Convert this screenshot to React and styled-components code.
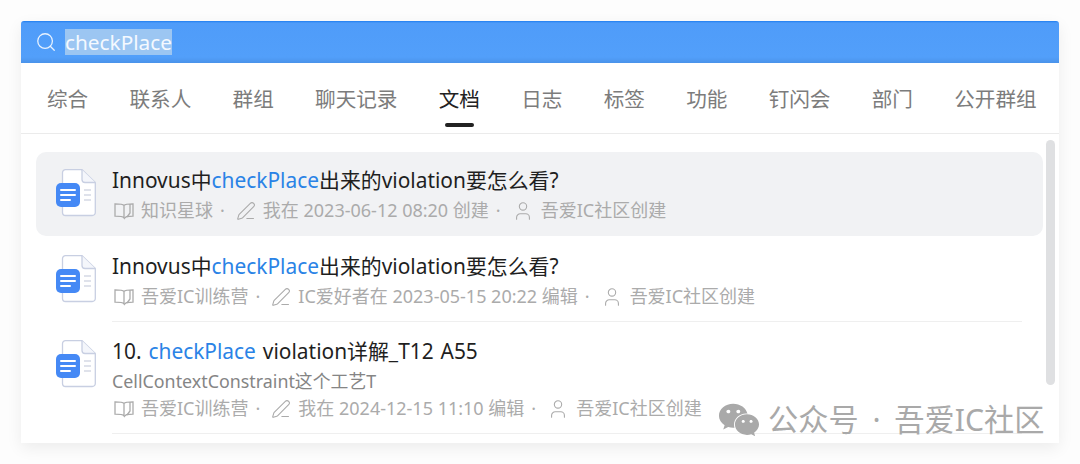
import React from "react";
import styled, { createGlobalStyle } from "styled-components";
import { Search, PenLine, User } from "lucide-react";
import { FaWeixin } from "react-icons/fa";

const FONT = `"Noto Sans", "Noto Sans CJK SC", sans-serif`;

const Global = createGlobalStyle`
  html, body { margin: 0; padding: 0; background: #fdfdfd; font-family: ${FONT}; }
`;
const Page = styled.div`
  position: relative;
  width: 1080px;
  height: 464px;
  padding: 21px 21px 21px;
  box-sizing: border-box;
  overflow: hidden;
`;
const Window = styled.div`
  position: relative;
  height: 422px;
  background: #fff;
  border-radius: 3px 3px 0 0;
  box-shadow: 0 5px 16px rgba(0, 0, 0, 0.07);
  overflow: hidden;
`;
const SearchBar = styled.div`
  height: 42px;
  box-sizing: border-box;
  display: flex;
  align-items: center;
  gap: 8px;
  padding-left: 14px;
  background: linear-gradient(#1f7df0 0, #4f9cf9 2px, #529ffa 36px, #4a93ea 42px);
  color: #e8f2fe;
`;
const Query = styled.span`
  font-size: 20.8px;
  line-height: 26px;
  background: #9cc6f2;
  color: #f4f9ff;
`;
const Tabs = styled.nav`
  height: 71px;
  box-sizing: border-box;
  display: flex;
  gap: 41.3px;
  padding: 0 0 0 26px;
  border-bottom: 1px solid #ebebeb;
`;
const Tab = styled.div`
  position: relative;
  font-size: 20.6px;
  line-height: 73px;
  height: 70px;
  white-space: nowrap;
  color: ${(p) => (p.$active ? "#222" : "#7c7c7c")};
  ${(p) =>
    p.$active &&
    `&::after {
      content: "";
      position: absolute;
      left: 6px;
      right: 6px;
      bottom: 6px;
      height: 4px;
      border-radius: 2px;
      background: #222;
    }`}
`;
const List = styled.div`
  padding: 18px 16px 0 15px;
`;
const Row = styled.div`
  position: relative;
  display: flex;
  gap: 16px;
  height: ${(p) => p.$h}px;
  box-sizing: border-box;
  padding: ${(p) => (p.$active ? "13px" : "14px")} 0 0 20px;
  border-radius: 10px;
  background: ${(p) => (p.$active ? "#f1f2f4" : "transparent")};
  margin-bottom: ${(p) => (p.$active ? "1px" : "0")};
  ${(p) =>
    !p.$active &&
    `&::after {
      content: "";
      position: absolute;
      left: 76px;
      right: 21px;
      bottom: 0;
      height: 1px;
      background: #efefef;
    }`}
`;
const DocWrap = styled.div`
  flex: none;
  width: 40px;
  height: 48px;
  margin-top: 4px;
`;
const Body = styled.div`
  min-width: 0;
`;
const Title = styled.div`
  font-size: 20.9px;
  line-height: 30px;
  word-spacing: 1.5px;
  color: #1f1f1f;
  white-space: nowrap;
`;
const Mark = styled.span`
  color: #2a83e6;
`;
const Snippet = styled.div`
  font-size: 17.85px;
  line-height: 30px;
  margin-bottom: -3px;
  color: #858585;
  white-space: nowrap;
`;
const Meta = styled.div`
  display: flex;
  align-items: center;
  gap: 7px;
  padding-left: 2px;
  font-size: 18px;
  line-height: 31px;
  color: #ababab;
  white-space: nowrap;
`;
const Dot = styled.span`
  margin: 0 4px 0 0;
`;
const Scrollbar = styled.div`
  position: absolute;
  left: 1025px;
  top: 119px;
  width: 9px;
  height: 245px;
  border-radius: 5px;
  background: #dfe0e2;
`;
const Watermark = styled.div`
  position: absolute;
  left: 718px;
  top: 399px;
  display: flex;
  align-items: center;
  gap: 8px;
  font-size: 30.2px;
  line-height: 38px;
  word-spacing: 6px;
  color: #a9a9a9;
  white-space: nowrap;
`;

const DocIcon = () => (
  <svg width="40" height="48" viewBox="0 0 40 48" fill="none">
    <path d="M9.500 0.700h16.500L39.300 13.500v30a3 3 0 0 1-3 3H9.500a3 3 0 0 1-3-3V3.700a3 3 0 0 1 3-3Z" fill="#fff" stroke="#c8cfe2" strokeWidth="1.300" />
    <path d="M26 0.700v9.800a3 3 0 0 0 3 3h10.300" fill="#f4f6fb" stroke="#c8cfe2" strokeWidth="1.300" />
    <path d="M28 21h7M28 26h7M28 31h7" stroke="#bfc6d8" strokeWidth="1.200" />
    <rect x="0" y="14" width="24" height="24" rx="5" fill="#4589f5" />
    <path d="M5 21h14M5 26h14M5 31h9" stroke="#fff" strokeWidth="2" strokeLinecap="round" />
  </svg>
);
const BookIcon = () => (
  <svg width="20" height="18" viewBox="0 0 20 18" fill="none" stroke="#ababab" strokeWidth="1.300">
    <path d="M10 3.500C9 2 7 1.800 1 1.800v12.400c6 0 8 .2 9 1.600V3.500Z" />
    <path d="M10 3.500c1-1.500 3-1.700 9-1.700v12.400c-3 0-5 .1-6.500.5L10 16.500" />
    <path d="M16 2v9l-3 4" />
  </svg>
);

const items = [
  {
    h: 84,
    active: true,
    title: <>Innovus中<Mark>checkPlace</Mark>出来的violation要怎么看?</>,
    space: "知识星球",
    editor: "我在 2023-06-12 08:20 创建",
  },
  {
    h: 85,
    title: <>Innovus中<Mark>checkPlace</Mark>出来的violation要怎么看?</>,
    space: "吾爱IC训练营",
    editor: "IC爱好者在 2023-05-15 20:22 编辑",
  },
  {
    h: 112,
    title: <>10. <Mark>checkPlace</Mark> violation详解_T12 A55</>,
    snippet: "CellContextConstraint这个工艺T",
    space: "吾爱IC训练营",
    editor: "我在 2024-12-15 11:10 编辑",
  },
];
const tabs = ["综合", "联系人", "群组", "聊天记录", "文档", "日志", "标签", "功能", "钉闪会", "部门", "公开群组"];

export default function App() {
  return (
    <Page>
      <Global />
      <Window>
        <SearchBar>
          <Search size={22} strokeWidth={1.4} />
          <Query>checkPlace</Query>
        </SearchBar>
        <Tabs>
          {tabs.map((t) => (
            <Tab key={t} $active={t === "文档"}>{t}</Tab>
          ))}
        </Tabs>
        <List>
          {items.map((it, i) => (
            <Row key={i} $h={it.h} $active={it.active}>
              <DocWrap><DocIcon /></DocWrap>
              <Body>
                <Title>{it.title}</Title>
                {it.snippet && <Snippet>{it.snippet}</Snippet>}
                <Meta>
                  <BookIcon />
                  <span>{it.space}</span>
                  <Dot>·</Dot>
                  <PenLine size={20} strokeWidth={1.3} />
                  <span>{it.editor}</span>
                  <Dot>·</Dot>
                  <User size={22} strokeWidth={1.2} />
                  <span>吾爱IC社区创建</span>
                </Meta>
              </Body>
            </Row>
          ))}
        </List>
        <Scrollbar />
      </Window>
      <Watermark>
        <FaWeixin size={42} />
        <span>公众号 · 吾爱IC社区</span>
      </Watermark>
    </Page>
  );
}
